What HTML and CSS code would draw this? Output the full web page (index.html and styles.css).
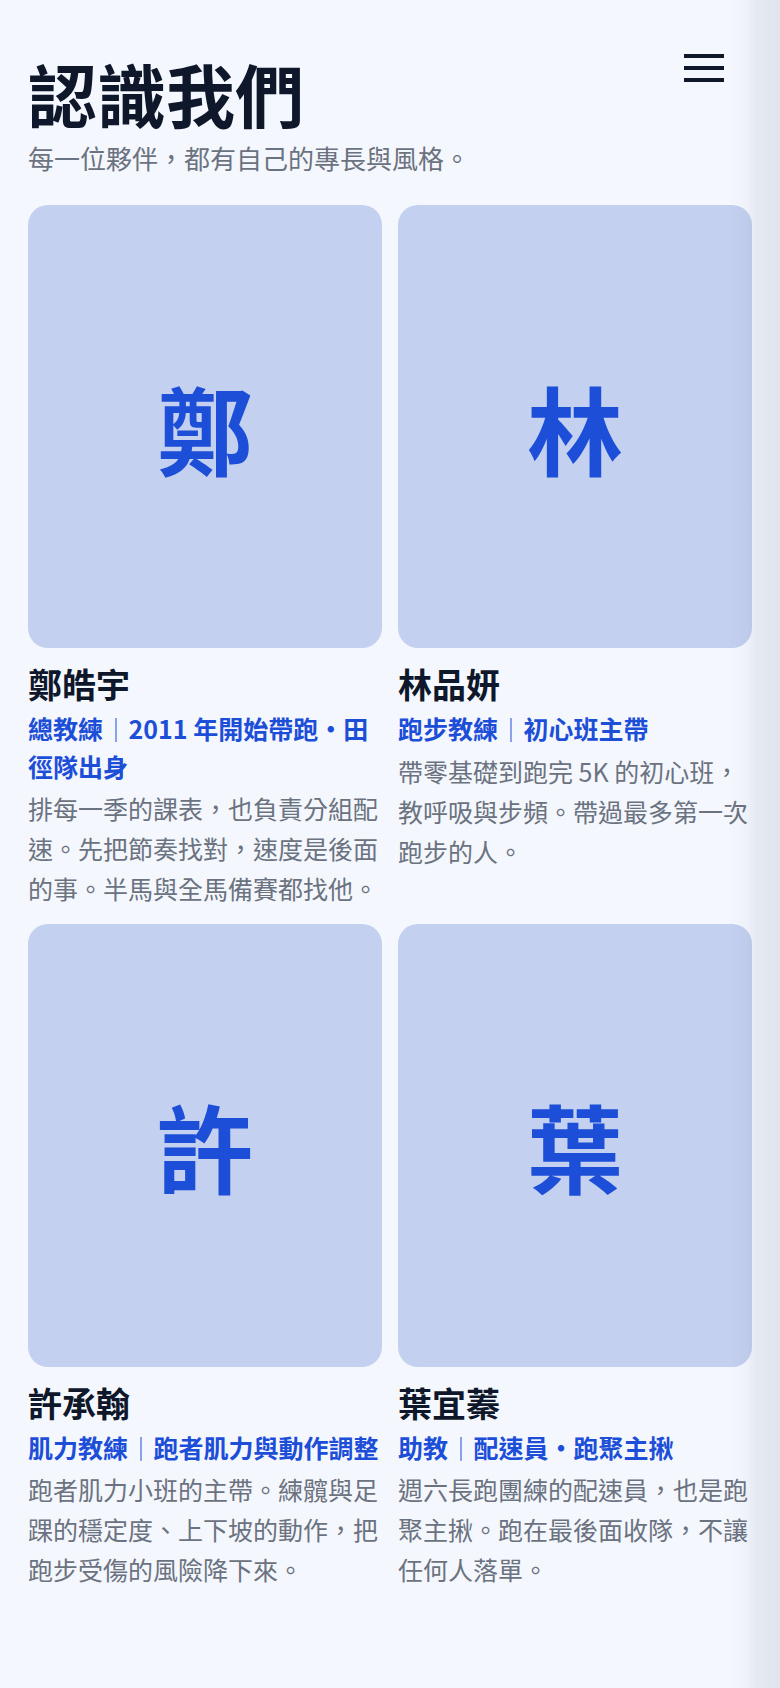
FILE: index.html
```html
<!DOCTYPE html>
<html lang="zh-Hant">
<head>
<meta charset="utf-8">
<meta name="viewport" content="width=device-width, initial-scale=1">
<title>認識我們</title>
<link rel="stylesheet" href="styles.css">
</head>
<body>
<header class="page-head">
  <h1 class="page-title">認識我們</h1>
  <p class="page-lead">每一位夥伴，都有自己的專長與風格。</p>
</header>

<button class="menu-toggle" type="button" aria-label="選單">
  <span class="menu-bar"></span>
  <span class="menu-bar"></span>
  <span class="menu-bar"></span>
</button>

<main class="team">
  <article class="member">
    <div class="avatar"><span class="avatar-initial">鄭</span></div>
    <h2 class="member-name">鄭皓宇</h2>
    <p class="member-role"><span>總教練</span><span class="role-sep"></span><span>2011 年開始帶跑・田徑隊出身</span></p>
    <p class="member-bio">排每一季的課表，也負責分組配速。先把節奏找對，速度是後面的事。半馬與全馬備賽都找他。</p>
  </article>
  <article class="member">
    <div class="avatar"><span class="avatar-initial">林</span></div>
    <h2 class="member-name">林品妍</h2>
    <p class="member-role"><span>跑步教練</span><span class="role-sep"></span><span>初心班主帶</span></p>
    <p class="member-bio">帶零基礎到跑完 5K 的初心班，教呼吸與步頻。帶過最多第一次跑步的人。</p>
  </article>
  <article class="member">
    <div class="avatar"><span class="avatar-initial">許</span></div>
    <h2 class="member-name">許承翰</h2>
    <p class="member-role"><span>肌力教練</span><span class="role-sep"></span><span>跑者肌力與動作調整</span></p>
    <p class="member-bio">跑者肌力小班的主帶。練髖與足踝的穩定度、上下坡的動作，把跑步受傷的風險降下來。</p>
  </article>
  <article class="member">
    <div class="avatar"><span class="avatar-initial">葉</span></div>
    <h2 class="member-name">葉宜蓁</h2>
    <p class="member-role"><span>助教</span><span class="role-sep"></span><span>配速員・跑聚主揪</span></p>
    <p class="member-bio">週六長跑團練的配速員，也是跑聚主揪。跑在最後面收隊，不讓任何人落單。</p>
  </article>
</main>
</body>
</html>
```

FILE: styles.css
```css
* {
  box-sizing: border-box;
}

html {
  background: #f4f7fe;
}

body {
  margin: 0;
  min-height: 1688px;
  background: #f4f7fe;
  color: #0f172a;
  font-family: "Noto Sans CJK TC", "Noto Sans", sans-serif;
  overflow-x: hidden;
}

body::after {
  content: "";
  position: fixed;
  top: 0;
  right: 0;
  bottom: 0;
  width: 52px;
  pointer-events: none;
  background: linear-gradient(to right,
    rgba(30, 41, 59, 0) 0%,
    rgba(30, 41, 59, 0.025) 35%,
    rgba(30, 41, 59, 0.065) 55%,
    rgba(30, 41, 59, 0.085) 100%);
}

.page-head {
  padding: 54px 28px 0;
}

.page-title {
  margin: 0;
  font-size: 69px;
  line-height: 1.15;
  font-weight: 700;
  color: #0f172a;
}

.page-lead {
  margin: 5px 0 0;
  font-size: 26px;
  line-height: 1.5;
  color: #6b7280;
}

.menu-toggle {
  position: fixed;
  top: 40px;
  right: 42px;
  display: flex;
  flex-direction: column;
  gap: 8px;
  padding: 14px;
  border: 0;
  background: none;
  cursor: pointer;
}

.menu-bar {
  display: block;
  width: 40px;
  height: 4px;
  background: #0f172a;
}

.team {
  display: grid;
  grid-template-columns: 1fr 1fr;
  column-gap: 16px;
  row-gap: 16px;
  padding: 28px 28px 40px;
}

.member {
  min-width: 0;
}

.avatar {
  aspect-ratio: 4 / 5;
  border-radius: 20px;
  background: #c3d0f0;
  display: flex;
  align-items: center;
  justify-content: center;
}

.avatar-initial {
  font-size: 96px;
  line-height: 1;
  font-weight: 700;
  color: #1d4ed8;
}

.member-name {
  margin: 11px 0 0;
  font-size: 34px;
  line-height: 1.45;
  font-weight: 700;
  color: #0f172a;
}

.member-role {
  margin: 2px 0 0;
  font-size: 25px;
  line-height: 1.5;
  font-weight: 700;
  color: #1d4ed8;
}

.role-sep {
  display: inline-block;
  width: 1.5px;
  height: 24px;
  margin: 0 12px;
  vertical-align: -3px;
  background: rgba(29, 78, 216, 0.5);
}

.member-bio {
  margin: 3px 0 0;
  font-size: 25px;
  line-height: 40px;
  color: #6b7280;
}
```
